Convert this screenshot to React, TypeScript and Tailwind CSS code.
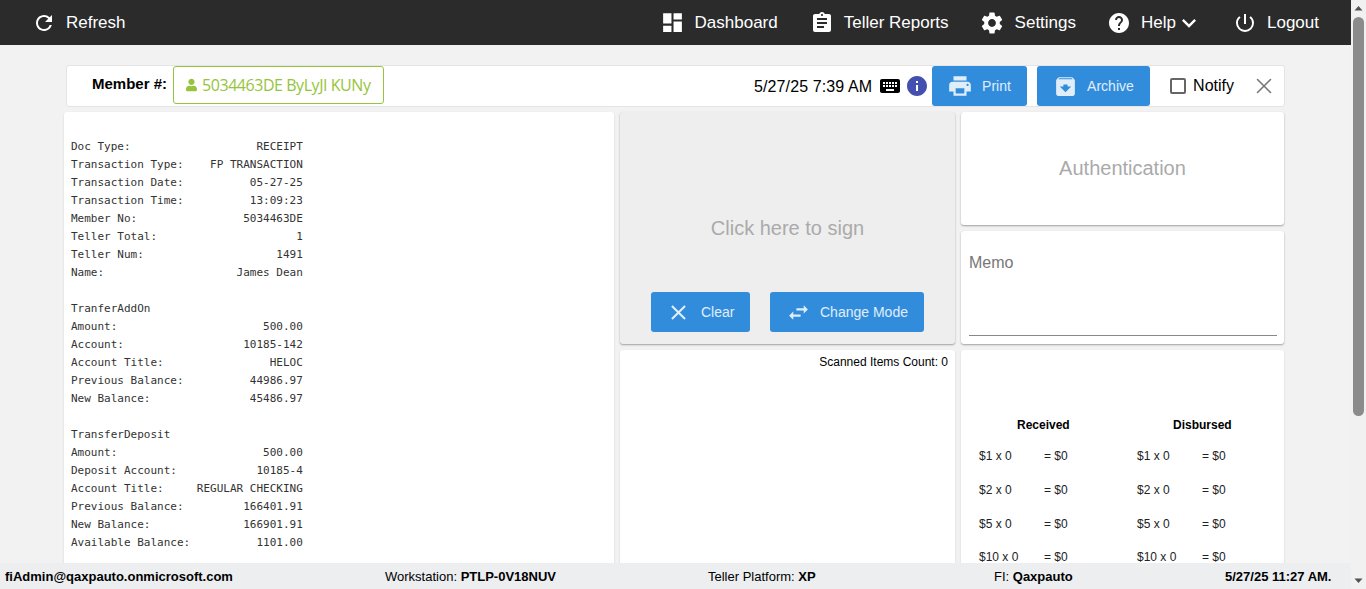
import React from 'react';
import { X } from 'lucide-react';
import { FaUser } from 'react-icons/fa';
import {
    MdArchive,
    MdAssignment,
    MdClose,
    MdDashboard,
    MdExpandMore,
    MdHelp,
    MdInfo,
    MdKeyboard,
    MdPowerSettingsNew,
    MdPrint,
    MdRefresh,
    MdSettings,
    MdSwapHoriz,
} from 'react-icons/md';

const RECEIPT_WIDTH = 35;

const receiptRows: [string, string?][] = [
    ['Doc Type:', 'RECEIPT'],
    ['Transaction Type:', 'FP TRANSACTION'],
    ['Transaction Date:', '05-27-25'],
    ['Transaction Time:', '13:09:23'],
    ['Member No:', '5034463DE'],
    ['Teller Total:', '1'],
    ['Teller Num:', '1491'],
    ['Name:', 'James Dean'],
    [''],
    ['TranferAddOn'],
    ['Amount:', '500.00'],
    ['Account:', '10185-142'],
    ['Account Title:', 'HELOC'],
    ['Previous Balance:', '44986.97'],
    ['New Balance:', '45486.97'],
    [''],
    ['TransferDeposit'],
    ['Amount:', '500.00'],
    ['Deposit Account:', '10185-4'],
    ['Account Title:', 'REGULAR CHECKING'],
    ['Previous Balance:', '166401.91'],
    ['New Balance:', '166901.91'],
    ['Available Balance:', '1101.00'],
];

const receipt = receiptRows
    .map(([label, value]) => (value ? label + value.padStart(RECEIPT_WIDTH - label.length) : label))
    .join('\n');

const denominations = ['$1', '$2', '$5', '$10'];

const NavItem = ({ icon, label, children, className = '' }: { icon: React.ReactNode; label: string; children?: React.ReactNode; className?: string }) => (
    <div className={`flex items-center gap-[10px] text-white text-[17px] ${className}`}>
        {icon}
        <span>{label}</span>
        {children}
    </div>
);

const BlueButton = ({ icon, label, className }: { icon: React.ReactNode; label: string; className: string }) => (
    <button className={`flex items-center bg-[#318cdc] text-white/85 text-sm rounded-[3px] ${className}`}>
        {icon}
        <span>{label}</span>
    </button>
);

const CashColumn = ({ title, titleClass }: { title: string; titleClass: string }) => (
    <div className="w-[158px] shrink-0">
        <div className={`text-xs font-bold text-black leading-[14px] h-[14px] ${titleClass}`}>{title}</div>
        {denominations.map((d, i) => (
            <div
                key={d}
                className={`flex text-xs text-[#222] leading-[14px] ${i === 0 ? 'mt-[17px]' : i === 3 ? 'mt-[19px]' : 'mt-[20px]'}`}
            >
                <span className="w-[65px]">{d} x 0</span>
                <span>= $0</span>
            </div>
        ))}
    </div>
);

export default function App() {
    return (
        <div className="flex h-[589px] w-full overflow-hidden bg-[#f2f2f2] font-['Liberation_Sans',Arial,sans-serif]">
            <div className="flex flex-col flex-1 min-w-0">
                <header className="h-[45px] shrink-0 bg-[#2b2b2b] flex items-center justify-between pl-[32px] pr-[32px]">
                    <NavItem icon={<MdRefresh className="w-[24px] h-[24px]" />} label="Refresh" />
                    <div className="flex items-center gap-[32px]">
                        <NavItem icon={<MdDashboard className="w-[25px] h-[25px]" />} label="Dashboard" />
                        <NavItem icon={<MdAssignment className="w-[24px] h-[24px]" />} label="Teller Reports" />
                        <NavItem icon={<MdSettings className="w-[26px] h-[26px]" />} label="Settings" className="-ml-[2px] -mr-[1px]" />
                        <NavItem icon={<MdHelp className="w-[24px] h-[24px]" />} label="Help">
                            <MdExpandMore className="w-[28px] h-[28px] -ml-[11px] -mr-[2px]" />
                        </NavItem>
                        <NavItem icon={<MdPowerSettingsNew className="w-[24px] h-[24px]" />} label="Logout" />
                    </div>
                </header>

                <main className="flex-1 min-h-0 overflow-hidden pl-[64px] pr-[67px] pt-[20px]">
                    <div className="ml-[2px] mr-[-1px] h-[42px] bg-white border border-[#e4e4e4] rounded-[3px] flex items-center pl-[25px] pr-[7px]">
                        <span className="text-[15px] font-bold text-black -mt-[4px]">Member #:</span>
                        <div className="ml-[6px] -mt-[2px] h-[38px] w-[211px] border border-[#96c43c] rounded-[3px] flex items-center pl-[12px] gap-[5px] text-[#96c43c] text-base font-['Open_Sans',sans-serif]">
                            <FaUser className="w-[11px] h-[14px]" />
                            <span className="tracking-[-0.45px]">5034463DE ByLyJI KUNy</span>
                        </div>
                        <div className="ml-auto text-base text-black tracking-[0.1px] mt-[2px]">5/27/25 7:39 AM</div>
                        <MdKeyboard className="ml-[6px] w-[24px] h-[24px] text-black" />
                        <MdInfo className="ml-[3px] w-[24px] h-[24px] text-[#4450b0]" />
                        <BlueButton icon={<MdPrint className="w-[26px] h-[26px] mr-[9px]" />} label="Print" className="ml-[3px] h-[40px] w-[95px] pl-[15px]" />
                        <BlueButton icon={<MdArchive className="w-[25px] h-[25px] mr-[9px]" />} label="Archive" className="ml-[10px] h-[40px] w-[113px] pl-[16px]" />
                        <span className="ml-[20px] w-[16px] h-[16px] border-2 border-[#666] rounded-[2px]" />
                        <span className="ml-[7px] text-base text-black">Notify</span>
                        <X className="ml-[17px] w-[26px] h-[26px] text-[#777]" strokeWidth={1.5} />
                    </div>

                    <div className="flex gap-[6px] mt-[5px] h-[460px]">
                        <section className="w-[550px] shrink-0 bg-white rounded-[3px] shadow-[0_1px_2px_rgba(0,0,0,0.15)] pl-[7px] pt-[26px]">
                            <pre className="font-['DejaVu_Sans_Mono',monospace] text-[11px] leading-[18px] text-[#333]">{receipt}</pre>
                        </section>

                        <div className="w-[335px] shrink-0 flex flex-col gap-[6px]">
                            <section className="h-[232px] bg-[#eeeeee] rounded-[3px] shadow-[0_1px_2px_rgba(0,0,0,0.35)] flex flex-col items-center">
                                <div className="pt-[102px] text-xl text-[#aaaaaa]">Click here to sign</div>
                                <div className="flex mt-auto mb-[12px] gap-[20px]">
                                    <BlueButton icon={<MdClose className="w-[25px] h-[25px] mr-[10px]" />} label="Clear" className="h-[40px] w-[99px] pl-[15px]" />
                                    <BlueButton icon={<MdSwapHoriz className="w-[25px] h-[25px] mr-[9px]" />} label="Change Mode" className="h-[40px] w-[154px] pl-[16px]" />
                                </div>
                            </section>
                            <section className="flex-1 bg-white rounded-[3px] shadow-[0_1px_2px_rgba(0,0,0,0.15)] text-right pr-[7px] pt-[4px] text-xs text-black">
                                Scanned Items Count: 0
                            </section>
                        </div>

                        <div className="w-[323px] shrink-0 flex flex-col gap-[6px]">
                            <section className="h-[113px] bg-white rounded-[3px] shadow-[0_1px_2px_rgba(0,0,0,0.35)] flex items-center justify-center pb-[2px] text-xl text-[#aaaaaa]">
                                Authentication
                            </section>
                            <section className="h-[113px] bg-white rounded-[3px] shadow-[0_1px_2px_rgba(0,0,0,0.35)] pl-[8px] pr-[7px] pt-[23px]">
                                <div className="text-base text-[#777] leading-[18px]">Memo</div>
                                <div className="mt-[63px] border-b border-[#888]" />
                            </section>
                            <section className="flex-1 bg-white rounded-[3px] shadow-[0_1px_2px_rgba(0,0,0,0.15)] flex pl-[18px] pt-[68px]">
                                <CashColumn title="Received" titleClass="pl-[38px]" />
                                <CashColumn title="Disbursed" titleClass="pl-[36px]" />
                            </section>
                        </div>
                    </div>
                </main>

                <footer className="relative z-10 h-[26px] shrink-0 bg-[#eceef0] flex items-center pt-[2px] text-[13px] text-black">
                    <b className="w-[385px] pl-[5px]">fiAdmin@qaxpauto.onmicrosoft.com</b>
                    <span className="w-[323px]">Workstation: <b>PTLP-0V18NUV</b></span>
                    <span className="w-[274px]">Teller Platform: <b>XP</b></span>
                    <span className="w-[243px] pl-[12px]">FI: <b>Qaxpauto</b></span>
                    <b>5/27/25 11:27 AM.</b>
                </footer>
            </div>

            <div className="w-[15px] shrink-0 bg-[#f1f1f1] flex flex-col items-center">
                <svg viewBox="0 0 15 17" className="w-[15px] h-[17px] shrink-0"><path d="M3.500 10.500 7.500 6l4 4.500z" fill="#505050" /></svg>
                <div className="w-[11px] h-[399px] bg-[#8b8b8b] rounded-full" />
                <svg viewBox="0 0 15 17" className="w-[15px] h-[17px] shrink-0 mt-auto"><path d="M3.500 6.500 7.500 11l4-4.500z" fill="#505050" /></svg>
            </div>
        </div>
    );
}
